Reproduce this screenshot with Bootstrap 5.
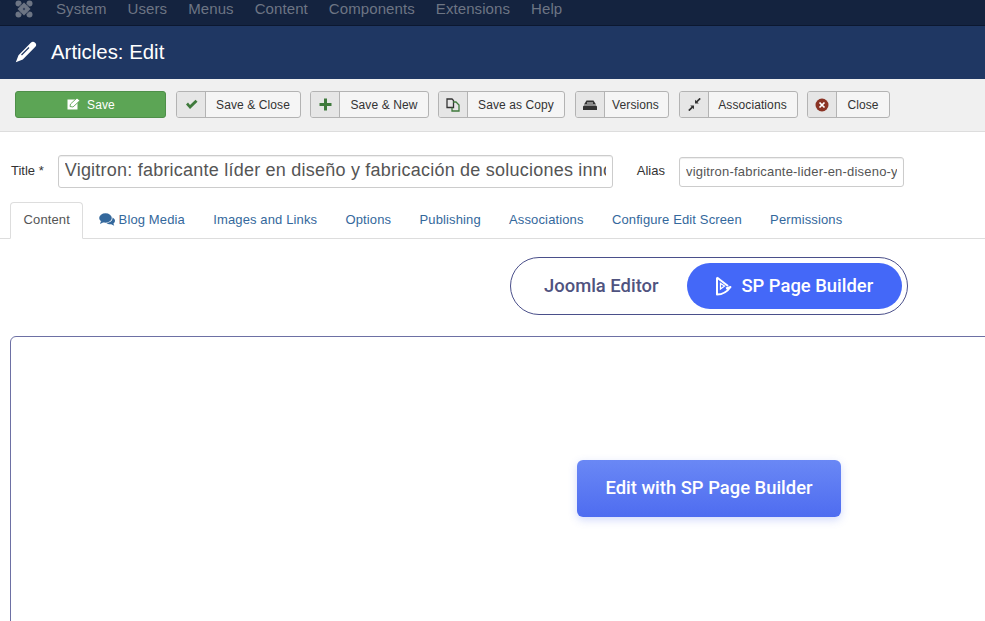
<!doctype html>
<html lang="en"><head><meta charset="utf-8"><title>Articles: Edit</title>
<link href="https://cdn.jsdelivr.net/npm/bootstrap@5.3.0/dist/css/bootstrap.min.css" rel="stylesheet">
<style>
html,body{height:621px;overflow:hidden}
body{font-family:"Liberation Sans",Arial,sans-serif;font-size:13px;color:#333;background:#fff}
.topbar{height:26px;background:#14233f;border-bottom:1px solid #0c1830;padding-left:15px;overflow:hidden}
.topbar svg{width:18px;height:18px;margin-right:23px;flex:none}
.topbar a{color:#6d7584;font-size:15px;letter-spacing:.09px;line-height:17px;text-decoration:none;margin-right:21px}
.headbar{height:53px;background:#1f3763;color:#fff;padding:0 0 2px 15px}
.headbar h1{font-size:20.4px;font-weight:400;margin:0 0 0 14px;line-height:24px}
.toolbar{height:53px;background:#f0f0f0;border-bottom:1px solid #ddd;padding:12px 15px 0}
.tb{height:27px;border:1px solid #b3b3b3;border-radius:3px;background:#f5f5f5;color:#333;font-size:12px;letter-spacing:.1px;display:flex;align-items:stretch;margin-right:9px;padding:0;line-height:26px;white-space:nowrap}
.tb .ico{width:29px;flex:none;background:#e6e6e6;border-right:1px solid #b3b3b3;border-radius:2px 0 0 2px;display:flex;align-items:center;justify-content:center}
.tb .lbl{flex:1;text-align:center}
.wclose{width:125px}.wnew{width:119px}.wcopy{width:127px;margin-right:10px}.wver{width:94px;margin-right:10px}.wasc{width:119px}.wcls{width:83px;margin-right:0}
.wver .lbl{padding-right:2px}.wasc .lbl{padding-right:1px}
.tbsave{width:151px;height:27px;background:#5ca555;border:1px solid #4e8f49;border-radius:3px;color:#fff;font-size:12px;letter-spacing:.1px;display:flex;align-items:center;justify-content:center;gap:6px;margin-right:10px;padding:0 0 0 1px}
.titlerow{padding:24px 0 0 11px;height:55px}
.titlerow label{margin:0 0 2px}
.ttl{width:555px;height:33px;margin-left:14px;border:1px solid #ccc;border-radius:3px;font-size:18px;letter-spacing:.225px;color:#555;padding:0 6px 2px;font-family:inherit;box-shadow:inset 0 1px 1px rgba(0,0,0,.07)}
.als{width:225px;height:30px;margin-left:14px;border:1px solid #ccc;border-radius:3px;font-size:13px;letter-spacing:.2px;color:#555;padding:0 6px;font-family:inherit;box-shadow:inset 0 1px 1px rgba(0,0,0,.07)}
.titlerow label.aliaslabel{margin-left:24px}
.tabsbar{border-bottom:1px solid #ddd;margin-top:15px;height:37px;padding-left:10px}
.tabsbar a{display:flex;align-items:center;gap:4px;height:37px;padding:0 14.15px 2px;color:#34689c;font-size:13px;letter-spacing:.13px;text-decoration:none;white-space:nowrap}
.tabsbar a.on{color:#555;background:#fff;border:1px solid #ddd;border-bottom-color:#fff;border-radius:4px 4px 0 0;padding:0 12.500px 2px;margin-right:1px}
.switchwrap{padding:18px 77px 0 0;height:97px}
.switcher{width:398px;height:58px;border:1px solid #4a4f8a;border-radius:29px;padding:5px;font-family:Roboto,sans-serif;font-weight:500;font-size:18.4px}
.swoff{width:171px;color:#50537f;padding-bottom:1px}
.swon{width:216px;height:46px;background:#4468f8;color:#fff;border-radius:23px;gap:9px;padding-bottom:1px}
.canvasbox{margin-left:10px;width:1000px;height:320px;border:1px solid #6d70a4;border-radius:6px;padding-top:123px;padding-left:566px}
.editbtn{width:264px;height:57px;border:0;border-radius:6px;background:linear-gradient(#6a88f5,#4e6cf0);color:#fff;font-family:Roboto,sans-serif;font-weight:500;font-size:18.4px;padding:0 0 1px;box-shadow:0 3px 8px rgba(80,108,240,.25)}
</style></head><body>
<nav class="topbar d-flex align-items-start">
<svg viewBox="0 0 18 18" fill="#6d7584"><circle cx="3.500" cy="3.500" r="3"/><circle cx="14.500" cy="3.500" r="3"/><circle cx="3.500" cy="14.500" r="3"/><circle cx="14.500" cy="14.500" r="3"/><path d="M9 2.500 15.500 9 9 15.500 2.500 9z"/><circle cx="9" cy="9" r="1.200" fill="#3a4560"/><path d="M6.300 4.200 4.200 6.300M13.800 11.700l-2.100 2.100M11.700 4.200l2.100 2.100M4.200 11.700l2.100 2.100" stroke="#14233f" stroke-width=".7"/></svg>
<a href="#">System</a><a href="#">Users</a><a href="#">Menus</a><a href="#">Content</a><a href="#">Components</a><a href="#">Extensions</a><a href="#">Help</a>
</nav>
<header class="headbar d-flex align-items-center">
<svg width="22" height="22" viewBox="0 0 22 22"><path d="M15.800 1.800a3 3 0 0 1 4.300 0 3 3 0 0 1 0 4.300L7.800 18.400 .8 21.200l2.700-7z" fill="#fff"/><path d="M14 6.500 6.500 14" stroke="#1f3763" stroke-width="1.300"/></svg>
<h1>Articles: Edit</h1>
</header>
<div class="toolbar d-flex align-items-start">
<button class="tbsave"><svg width="14" height="13" viewBox="0 0 14 13"><path d="M.5 1.500h10v10H.5z" fill="#fff"/><path d="M3 8.500 3.500 6 10 0l3 2.500L6 9z" fill="#fff" stroke="#5ca555" stroke-width=".9"/></svg>Save</button>
<button class="tb wclose"><span class="ico"><svg width="13" height="11" viewBox="0 0 13 11"><path d="M1 5.500 3 3.500 5 6 10.500.8 12.500 2.800 5 10z" fill="#3f7a3c"/></svg></span><span class="lbl">Save &amp; Close</span></button>
<button class="tb wnew"><span class="ico"><svg width="13" height="13" viewBox="0 0 13 13"><path d="M5 .5h3V5h4.500v3H8v4.500H5V8H.5V5H5z" fill="#3f7a3c"/></svg></span><span class="lbl">Save &amp; New</span></button>
<button class="tb wcopy"><span class="ico"><svg width="14" height="14" viewBox="0 0 14 14" fill="none" stroke-width="1.300"><path d="M1 1h5l1.500 1.500V9.500H1z" stroke="#333"/><path d="M7 4h3l3 3v6H6V9.500" stroke="#3f7a3c"/></svg></span><span class="lbl">Save as Copy</span></button>
<button class="tb wver"><span class="ico"><svg width="14" height="10" viewBox="0 0 14 10"><path d="M3.500.500h7L13 4.500H1zM1 5.500h12L14 6.500V10H0V6.500z" fill="#333"/><path d="M4 3h6" stroke="#e6e6e6"/></svg></span><span class="lbl">Versions</span></button>
<button class="tb wasc"><span class="ico"><svg width="13" height="13" viewBox="0 0 13 13" fill="#333"><path d="M12.800.9 9.500 4.200l1.300 1.300H7V1.700l1.300 1.300L11.600-.2zM.2 12.100l3.300-3.300-1.300-1.300H6v3.800L4.700 10l-3.300 3.200z"/></svg></span><span class="lbl">Associations</span></button>
<button class="tb wcls"><span class="ico"><svg width="14" height="14" viewBox="0 0 14 14"><circle cx="7" cy="7" r="6.500" fill="#8a3324"/><path d="M4.500 4.500l5 5m0-5-5 5" stroke="#fff" stroke-width="1.700"/></svg></span><span class="lbl">Close</span></button>
</div>
<div class="titlerow d-flex align-items-center">
<label>Title *</label>
<input class="ttl" value="Vigitron: fabricante líder en diseño y fabricación de soluciones innovadoras">
<label class="aliaslabel">Alias</label>
<input class="als" value="vigitron-fabricante-lider-en-diseno-y-fabricacion">
</div>
<div class="tabsbar d-flex">
<a class="on" href="#">Content</a>
<a href="#"><svg width="16" height="13" viewBox="0 0 16 13" fill="#34689c"><ellipse cx="6.500" cy="5" rx="6.300" ry="4.700"/><path d="M2 8 1 11l4-2z"/><path d="M13.500 4.500C15 5.300 16 6.500 16 7.800c0 1.100-.6 2-1.600 2.700l.8 2.200-3-1.500c-2 .2-3.800-.3-4.800-1.300 3.500 0 6.400-2 6.100-5.400z"/></svg>Blog Media</a>
<a href="#">Images and Links</a><a href="#">Options</a><a href="#">Publishing</a><a href="#">Associations</a><a href="#">Configure Edit Screen</a><a href="#">Permissions</a>
</div>
<div class="switchwrap d-flex justify-content-end">
<div class="switcher d-flex align-items-center">
<div class="swoff d-flex justify-content-center">Joomla Editor</div>
<div class="swon d-flex align-items-center justify-content-center"><svg width="17" height="20" viewBox="0 0 17 20" fill="none" stroke="#fff"><path d="M2 1.500v17c5 0 10-2.500 13.500-7.500L11 12.500" stroke-width="2" stroke-linejoin="round"/><path d="M2 1.500 13 10" stroke-width="2"/><path d="M5.500 7.500V13l4-3z" stroke-width="1.300"/></svg>SP Page Builder</div>
</div>
</div>
<div class="canvasbox"><button class="editbtn">Edit with SP Page Builder</button></div>
<script src="https://cdn.jsdelivr.net/npm/bootstrap@5.3.0/dist/js/bootstrap.bundle.min.js"></script>
</body></html>
